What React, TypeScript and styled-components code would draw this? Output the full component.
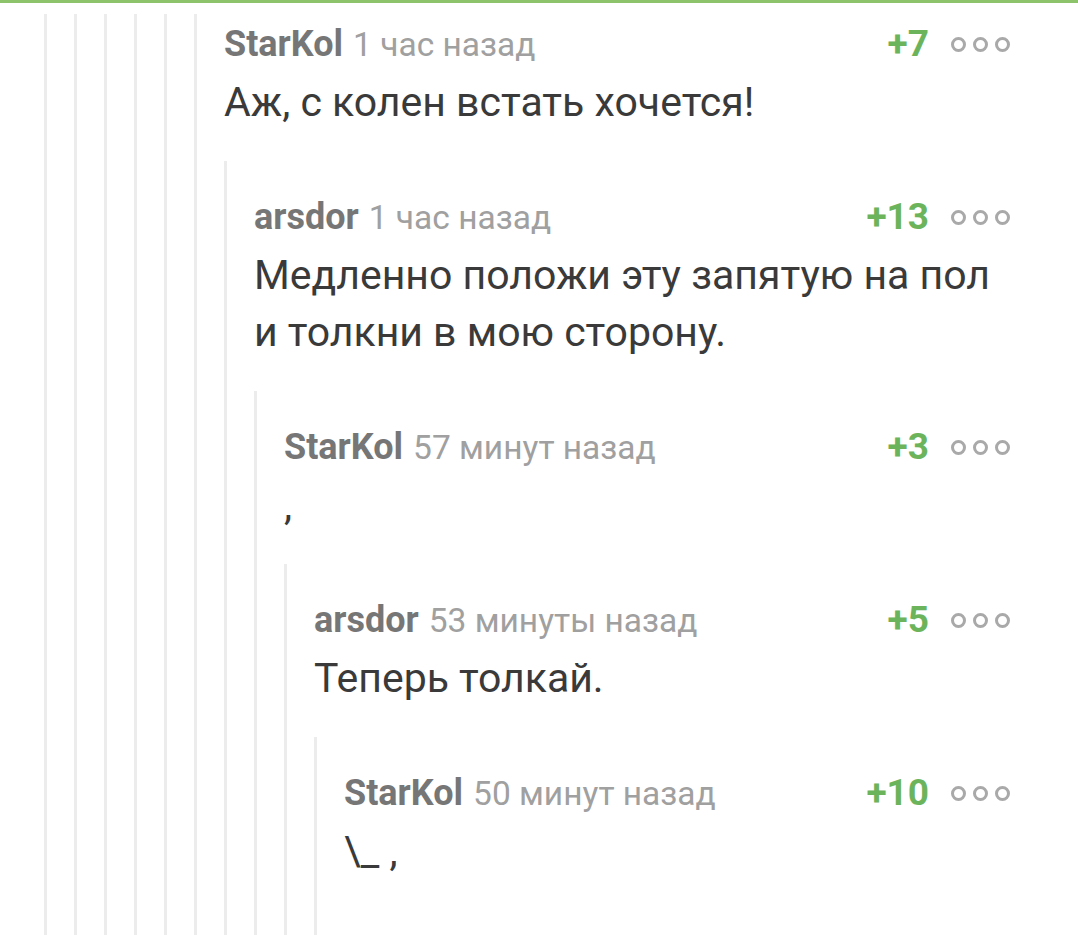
import React from "react";
import styled, { createGlobalStyle } from "styled-components";

const GlobalStyle = createGlobalStyle`
  html, body {
    margin: 0;
    padding: 0;
    background: #ffffff;
    height: 100%;
    overflow: hidden;
  }
  body {
    font-family: Roboto, "Noto Sans", "DejaVu Sans", sans-serif;
  }
`;

const TopBar = styled.div`
  height: 3px;
  background: #8cc36b;
`;

const Page = styled.div`
  padding: 0 68px 0 44px;
`;

const Thread = styled.div<{ $nested?: boolean }>`
  border-left: 3px solid #ececec;
  padding-left: 27px;
  margin-top: ${(p) => (p.$nested ? "30px" : "0")};
  padding-top: ${(p) => (p.$nested ? "26px" : "0")};
`;

const CommentBox = styled.div<{ $first?: boolean; $last?: boolean }>`
  margin-top: ${(p) => (p.$first ? "11px" : "0")};
  padding-bottom: ${(p) => (p.$last ? "60px" : "0")};
`;

const Header = styled.div`
  display: flex;
  align-items: baseline;
  height: 60px;
  line-height: 60px;
  font-size: 36px;
  white-space: nowrap;
`;

const User = styled.span`
  font-weight: 700;
  color: #767676;
  font-size: 36px;
`;

const Time = styled.span`
  color: #a0a0a0;
  font-size: 33.5px;
  margin-left: 10px;
`;

const Right = styled.span`
  margin-left: auto;
  display: inline-flex;
  align-items: baseline;
`;

const Rating = styled.span`
  color: #6cb45b;
  font-weight: 700;
  font-size: 37px;
`;

const Dots = styled.span`
  display: inline-flex;
  align-self: center;
  margin-left: 22px;
  gap: 7px;
`;

const Dot = styled.span`
  display: inline-block;
  width: 15px;
  height: 15px;
  box-sizing: border-box;
  border: 3px solid #a9a9a9;
  border-radius: 50%;
`;

const Body = styled.div`
  font-size: 41px;
  line-height: 57px;
  color: #3a3a3a;
`;

const Line = styled.span`
  display: block;
  white-space: nowrap;
`;

type CommentData = {
  user: string;
  time: string;
  rating: string;
  lines: string[];
  reply?: CommentData;
};

const data: CommentData = {
  user: "StarKol",
  time: "1 час назад",
  rating: "+7",
  lines: ["Аж, с колен встать хочется!"],
  reply: {
    user: "arsdor",
    time: "1 час назад",
    rating: "+13",
    lines: ["Медленно положи эту запятую на пол", "и толкни в мою сторону."],
    reply: {
      user: "StarKol",
      time: "57 минут назад",
      rating: "+3",
      lines: [","],
      reply: {
        user: "arsdor",
        time: "53 минуты назад",
        rating: "+5",
        lines: ["Теперь толкай."],
        reply: {
          user: "StarKol",
          time: "50 минут назад",
          rating: "+10",
          lines: ["\\_ ,"],
        },
      },
    },
  },
};

function Comment({ c, first }: { c: CommentData; first?: boolean }) {
  return (
    <CommentBox $first={first} $last={!c.reply}>
      <Header>
        <User>{c.user}</User>
        <Time>{c.time}</Time>
        <Right>
          <Rating>{c.rating}</Rating>
          <Dots>
            <Dot />
            <Dot />
            <Dot />
          </Dots>
        </Right>
      </Header>
      <Body>
        {c.lines.map((l, i) => (
          <Line key={i}>{l}</Line>
        ))}
      </Body>
      {c.reply && (
        <Thread $nested>
          <Comment c={c.reply} />
        </Thread>
      )}
    </CommentBox>
  );
}

export default function App() {
  return (
    <>
      <GlobalStyle />
      <TopBar />
      <Page>
        <Thread>
          <Thread>
            <Thread>
              <Thread>
                <Thread>
                  <Thread>
                    <Comment c={data} first />
                  </Thread>
                </Thread>
              </Thread>
            </Thread>
          </Thread>
        </Thread>
      </Page>
    </>
  );
}
